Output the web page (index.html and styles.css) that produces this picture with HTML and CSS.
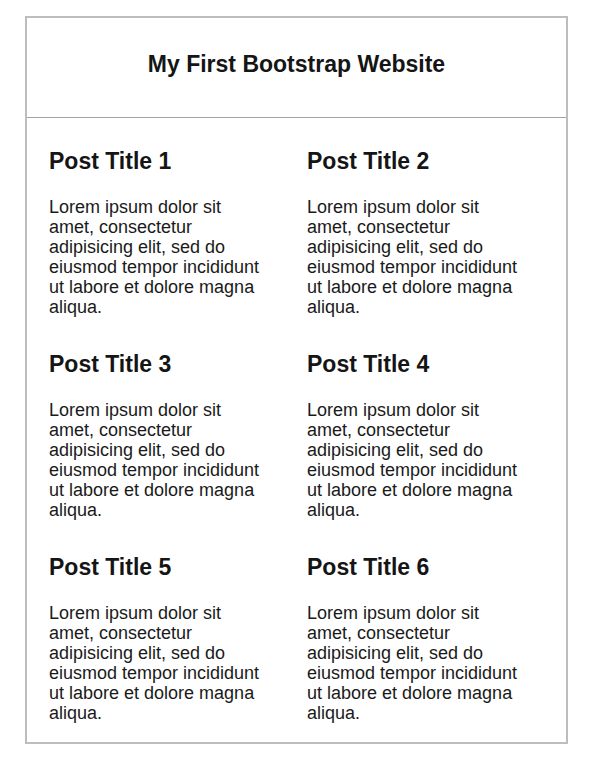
FILE: index.html
```html
<!DOCTYPE html>
<html lang="en">
<head>
<meta charset="utf-8">
<title>My First Bootstrap Website</title>
<link rel="stylesheet" href="styles.css">
</head>
<body>
<div class="page">
  <header class="site-header">
    <h1 class="site-title">My First Bootstrap Website</h1>
  </header>
  <main class="posts">
    <article class="post">
      <h2 class="post-title">Post Title 1</h2>
      <p class="post-text">Lorem ipsum dolor sit amet, consectetur adipisicing elit, sed do eiusmod tempor incididunt ut labore et dolore magna aliqua.</p>
    </article>
    <article class="post">
      <h2 class="post-title">Post Title 2</h2>
      <p class="post-text">Lorem ipsum dolor sit amet, consectetur adipisicing elit, sed do eiusmod tempor incididunt ut labore et dolore magna aliqua.</p>
    </article>
    <article class="post">
      <h2 class="post-title">Post Title 3</h2>
      <p class="post-text">Lorem ipsum dolor sit amet, consectetur adipisicing elit, sed do eiusmod tempor incididunt ut labore et dolore magna aliqua.</p>
    </article>
    <article class="post">
      <h2 class="post-title">Post Title 4</h2>
      <p class="post-text">Lorem ipsum dolor sit amet, consectetur adipisicing elit, sed do eiusmod tempor incididunt ut labore et dolore magna aliqua.</p>
    </article>
    <article class="post">
      <h2 class="post-title">Post Title 5</h2>
      <p class="post-text">Lorem ipsum dolor sit amet, consectetur adipisicing elit, sed do eiusmod tempor incididunt ut labore et dolore magna aliqua.</p>
    </article>
    <article class="post">
      <h2 class="post-title">Post Title 6</h2>
      <p class="post-text">Lorem ipsum dolor sit amet, consectetur adipisicing elit, sed do eiusmod tempor incididunt ut labore et dolore magna aliqua.</p>
    </article>
  </main>
</div>
</body>
</html>
```
FILE: styles.css
```css
html, body {
  margin: 0;
  padding: 0;
  background: #ffffff;
}

body {
  font-family: "Liberation Sans", Arial, sans-serif;
  color: #151515;
}

.page {
  box-sizing: border-box;
  width: 543px;
  height: 728px;
  margin: 16px 0 0 25px;
  border: 2px solid #bdbdbd;
}

.site-header {
  height: 100px;
  box-sizing: border-box;
  padding-top: 32px;
  border-bottom: 1px solid #a3a3a3;
}

.site-title {
  margin: 0;
  font-size: 23px;
  line-height: 28px;
  font-weight: bold;
  text-align: center;
}

.posts {
  display: grid;
  grid-template-columns: 216px 216px;
  column-gap: 42px;
  row-gap: 33px;
  padding: 29px 0 0 22px;
}

.post-title {
  margin: 0 0 22px;
  font-size: 23px;
  line-height: 28px;
  font-weight: bold;
}

.post-text {
  margin: 0;
  font-size: 18px;
  line-height: 20px;
  color: #1a1a1a;
}
```
